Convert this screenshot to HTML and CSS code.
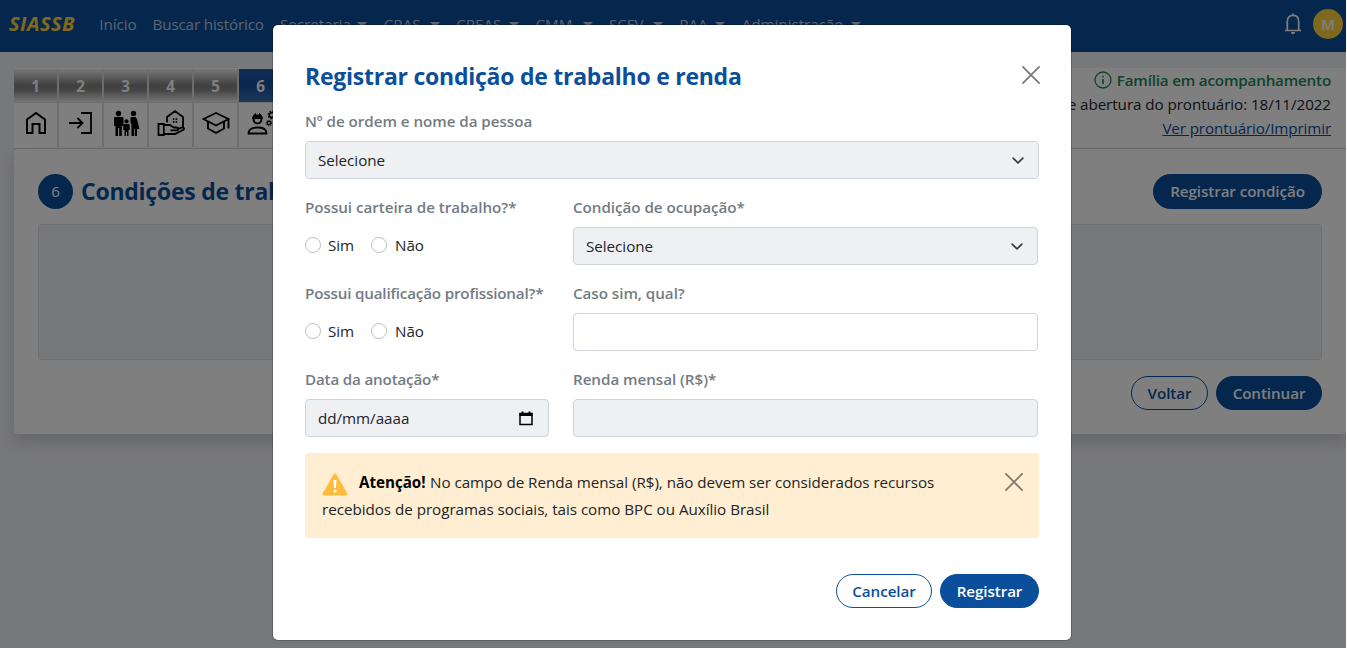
FILE: index.html
```html
<!DOCTYPE html>
<html lang="pt-BR">
<head>
<meta charset="utf-8">
<title>SIASSB</title>
<link rel="stylesheet" href="styles.css">
</head>
<body>
<div class="page">
  <header class="topbar">
    <span class="logo">SIASSB</span>
    <nav class="nav">
      <a class="w-inicio">Início</a>
      <a class="w-buscar">Buscar histórico</a>
      <a class="drop w-sec">Secretaria</a>
      <a class="drop w-cras">CRAS</a>
      <a class="drop w-creas">CREAS</a>
      <a class="drop w-cmm">CMM</a>
      <a class="drop w-scfv">SCFV</a>
      <a class="drop w-paa">PAA</a>
      <a class="drop w-adm">Administração</a>
    </nav>
    <svg class="bell" viewBox="0 0 20 24" fill="none" stroke="#fff" stroke-width="1.7"><path d="M2 18.500h16M4.300 18V9.500C4.300 5.500 6.500 3.300 10 3.300s5.700 2.200 5.700 6.200V18M10 3.300V1.500"/><path d="M8 20.500h4l-2 1.500z" fill="#fff" stroke-width="1"/></svg>
    <span class="avatar">M</span>
  </header>

  <main class="main">
    <section class="record">
      <div class="tabs">
        <div class="tab"><b>1</b><span><svg viewBox="0 0 24 26" fill="none" stroke="#000" stroke-width="2"><path d="M3 9.500 12 3l9 6.500V23h-5.500v-9h-7v9H3z"/></svg></span></div>
        <div class="tab"><b>2</b><span><svg viewBox="0 0 24 26" fill="none" stroke="#000" stroke-width="1.800"><path d="M0 13h13M8.500 8l5 5-5 5M12 3h10v20H12"/></svg></span></div>
        <div class="tab"><b>3</b><span><svg class="wide" viewBox="0 0 28 28"><circle cx="6.500" cy="4.500" r="2.700"/><path d="M2 9q0-1 1-1h7.500q1 0 1 1v8h-1.700v10H7.200v-8H6v8H3.500V17H2z"/><circle cx="14.500" cy="12.300" r="2.100"/><path d="M11.300 16q0-1 1-1h4.400q1 0 1 1v5h-1.200v6h-1.500v-4h-1v4h-1.500v-6h-1.200z"/><circle cx="21.500" cy="4.500" r="2.700"/><path d="M18.500 9q0-1 1-1h4l1.500 2 2.500 10H25v7h-2.200v-7h-.8v7h-2.500V15l-1-1z"/></svg></span></div>
        <div class="tab"><b>4</b><span><svg class="wide" viewBox="0 0 28 28" fill="none" stroke="#000" stroke-width="1.800"><path d="M10 13.500V8L18 2l8 6V18M1.500 15h5.300v11H1.500zM6.800 16h6l4 2.500h2.700c2.300 0 2.300 2.800 0 2.800h-6M20 20.500l4.500-1.800c2.500-.7 3.500 1.300 1.500 2.300L18 25H6.800"/><path d="M15.800 9.300h1.600v1.600h-1.600zm2.800 0h1.600v1.600h-1.600zm-2.800 2.800h1.600v1.600h-1.600zm2.800 0h1.600v1.600h-1.600z" fill="#000" stroke="none"/></svg></span></div>
        <div class="tab"><b>5</b><span><svg class="wide" viewBox="0 0 28 28" fill="none" stroke="#000" stroke-width="1.900"><path d="M1.500 10 14 4l12.500 6L14 16.500zM6 12.500v7l8 4.500 8-4.500v-7M26.500 10v9.500"/></svg></span></div>
        <div class="tab active"><b>6</b><span><svg class="wide" viewBox="0 0 28 28" fill="none" stroke="#000" stroke-width="1.800"><path d="M1.500 24.500c0-4.500 3-6 9-6s9 1.500 9 6z"/><path d="M6.500 9.500c0 6.500 8 6.500 8 0"/><path d="M5.500 9.500q.5-3.500 3-5v1.500h4V4.500q2.500 1.500 3 5z" fill="#000" stroke-width="1"/><circle cx="25" cy="6" r="2.600" stroke-width="1.500"/><circle cx="25" cy="6" r="3.800" stroke-width="1.300" stroke-dasharray="1.500 1.480"/><circle cx="22" cy="14" r="1.700" stroke-width="1.300"/><circle cx="22" cy="14" r="2.700" stroke-width="1" stroke-dasharray="1.200 .92"/></svg></span></div>
      </div>
      <div class="status">
        <div class="family"><svg viewBox="0 0 18 18" fill="none" stroke="#198754" stroke-width="1.300"><circle cx="9" cy="9" r="8"/><path d="M9 8v5M9 4.800v1.500" stroke-width="1.600"/></svg><span>Família em acompanhamento</span></div>
        <div class="opened">Data de abertura do prontuário: 18/11/2022</div>
        <a class="print">Ver prontuário/Imprimir</a>
      </div>
    </section>

    <section class="card">
      <div class="card-head">
        <span class="step">6</span>
        <h2>Condições de trabalho e renda</h2>
        <button class="btn primary big">Registrar condição</button>
      </div>
      <div class="empty"></div>
      <div class="card-foot">
        <button class="btn outline w-voltar">Voltar</button>
        <button class="btn primary w-cont">Continuar</button>
      </div>
    </section>
  </main>
</div>

<div class="backdrop">
  <div class="dialog">
    <div class="dialog-head">
      <h1>Registrar condição de trabalho e renda</h1>
      <svg class="close" viewBox="0 0 16 16"><path d="M.8.8l14.400 14.400M15.200.8.8 15.200"/></svg>
    </div>
    <div class="field full">
      <label>Nº de ordem e nome da pessoa</label>
      <div class="control filled"><span>Selecione</span><svg class="chev" viewBox="0 0 16 16"><path d="m2 5 6 6 6-6"/></svg></div>
    </div>
    <div class="grid">
      <div class="field">
        <label>Possui carteira de trabalho?*</label>
        <div class="radios"><i></i><span class="sim">Sim</span><i></i><span class="nao">Não</span></div>
      </div>
      <div class="field">
        <label>Condição de ocupação*</label>
        <div class="control filled"><span>Selecione</span><svg class="chev" viewBox="0 0 16 16"><path d="m2 5 6 6 6-6"/></svg></div>
      </div>
      <div class="field">
        <label class="tight">Possui qualificação profissional?*</label>
        <div class="radios"><i></i><span class="sim">Sim</span><i></i><span class="nao">Não</span></div>
      </div>
      <div class="field">
        <label>Caso sim, qual?</label>
        <div class="control"></div>
      </div>
      <div class="field">
        <label class="tight">Data da anotação*</label>
        <div class="control filled"><span>dd/mm/aaaa</span><svg class="cal" viewBox="0 0 14 15"><path d="M1 2.500h12v11H1z" fill="none" stroke="#000" stroke-width="1.500"/><path d="M.5 2h13v3H.5zM2.500.5h2v2h-2zm7 0h2v2h-2z"/></svg></div>
      </div>
      <div class="field">
        <label>Renda mensal (R$)*</label>
        <div class="control filled"></div>
      </div>
    </div>
    <div class="alert">
      <div class="alert-text">
        <div class="line"><svg class="warn" viewBox="0 0 26 23"><path d="M13 2 24 21H2z" fill="#ffbc3b" stroke="#ffbc3b" stroke-width="3" stroke-linejoin="round"/><path d="M11.500 7h3l-.6 8h-1.800z" fill="#fff"/><circle cx="13" cy="18" r="1.600" fill="#fff"/></svg><b>Atenção!</b><span>No campo de Renda mensal (R$), não devem ser considerados recursos</span></div>
        <div class="line"><span>recebidos de programas sociais, tais como BPC ou Auxílio Brasil</span></div>
      </div>
      <svg class="close" viewBox="0 0 16 16"><path d="M.8.8l14.400 14.400M15.200.8.8 15.200"/></svg>
    </div>
    <div class="dialog-foot">
      <button class="btn outline w-canc">Cancelar</button>
      <button class="btn primary w-reg">Registrar</button>
    </div>
  </div>
</div>
</body>
</html>
```

FILE: styles.css
```css
* { box-sizing: border-box; }
html { background: #fff; }
body { margin: 0; height: 648px; overflow: hidden; font: 15.200px/24px "Open Sans", "Noto Sans", sans-serif; letter-spacing: -0.030px; color: #212529; }
h1, h2 { margin: 0; color: #0b4f9c; font-weight: 700; letter-spacing: -0.250px; }
.page { width: 1346px; height: 648px; overflow: hidden; background: #eff0f3; }
.page, .dialog { white-space: nowrap; }

.topbar { display: flex; align-items: center; height: 52px; padding: 0 3px 4px 9px; background: #0b4f9c; }
.logo { width: 82px; color: #ffd23c; font-size: 20px; font-weight: 700; font-style: italic; letter-spacing: 0.450px; }
.nav { display: flex; flex: 1; color: #b6cae1; }
.nav a { margin: 0 8.200px; }
.drop { display: flex; align-items: center; justify-content: space-between; }
.drop::after { content: ""; border: 5px solid transparent; border-top-color: #b6cae1; border-bottom: 0; }
.w-inicio { width: 37px; }
.w-buscar { width: 111px; letter-spacing: -0.150px; }
.w-sec { width: 87.500px; }
.w-cras { width: 56px; }
.w-creas { width: 63px; }
.w-cmm { width: 57px; }
.w-scfv { width: 54px; }
.w-paa { width: 46px; }
.w-adm { width: 119px; }
.bell { width: 20px; height: 24px; margin-right: 10px; }
.avatar { width: 30px; height: 30px; border-radius: 50%; background: #ffd23c; color: #fff; line-height: 30px; text-align: center; font-weight: 600; }

.main { padding: 16px 0 0 14px; }
.record { display: flex; justify-content: space-between; height: 81px; padding: 1px 15px 0 0; background: #fff; border-bottom: 1px solid #d2d3d5; }
.tabs { display: flex; gap: 2px; background: #dcdcde; height: 78px; }
.tab { width: 43px; }
.tab b { display: block; height: 33px; line-height: 35px; text-align: center; color: #fff; background: linear-gradient(#efefef, #808080 50%, #8c8c8c 65%, #ededed); }
.tab.active b { background: linear-gradient(#1f5aa6, #1450a0 50%, #3a70b2); }
.tab span { display: flex; align-items: center; justify-content: center; height: 45px; border-top: 1px solid #ddd; background: #fff; }
.tab svg { width: 24px; height: 26px; margin-top: -5px; }
.tab svg.wide { width: 28px; height: 28px; }
.status { text-align: right; }
.family { display: flex; align-items: center; justify-content: flex-end; gap: 5px; margin-top: -1px; color: #198754; font-weight: 600; letter-spacing: -0.180px; }
.family svg { width: 18px; height: 18px; }
.opened { letter-spacing: -0.060px; }
.print { letter-spacing: -0.120px; color: #0b4f9c; text-decoration: underline; }

.card { height: 285px; padding: 24px 24px 0; border-radius: 4px; background: #fff; box-shadow: 0 8px 16px rgba(0, 0, 0, .15); }
.card-head { display: flex; align-items: center; }
.step { width: 35px; height: 35px; margin-right: 8px; border-radius: 50%; background: #0b4f9c; color: #fff; line-height: 35px; text-align: center; }
.card-head h2 { flex: 1; width: 0; overflow: hidden; font-size: 23px; line-height: 36px; }
.empty { height: 136px; margin: 15px 0 16px; border: 1px solid #dcdde0; border-radius: 3px; background: #eff0f3; }
.card-foot, .dialog-foot { display: flex; justify-content: flex-end; gap: 8px; }
.btn { height: 34px; padding: 0; border: 1px solid #0b4f9c; border-radius: 18px; font: 600 15.200px/24px "Open Sans", "Noto Sans", sans-serif; letter-spacing: -0.080px; }
.primary { background: #0b4f9c; color: #fff; }
.outline { background: #fff; color: #0b4f9c; }
.big { width: 169px; height: 35px; }
.w-voltar { width: 77px; }
.w-cont { width: 106px; }
.w-canc { width: 96px; }
.w-reg { width: 99px; }

.backdrop { position: absolute; top: 0; left: 0; width: 1346px; height: 648px; padding: 25px 0 0 273px; background: rgba(0, 0, 0, .5); }
.dialog { width: 798px; height: 615px; padding: 32px; border-radius: 5px; background: #fff; box-shadow: 0 0 0 1px rgba(0, 0, 0, .2); }
.dialog-head { display: flex; align-items: center; justify-content: space-between; height: 38px; margin-bottom: 14px; }
.dialog-head h1 { font-size: 23px; }
.close { width: 18px; height: 18px; margin-right: -1px; fill: none; stroke: #777; stroke-width: 1.500; stroke-linecap: round; }
.dialog-head .close { margin-top: -2px; }
.field label { display: block; margin-bottom: 8px; height: 24px; color: #737b83; font-weight: 600; letter-spacing: -0.040px; }
.field label.tight { letter-spacing: -0.180px; }
.full { margin-bottom: 16px; }
.grid { display: grid; grid-template-columns: 244px 465px; gap: 16px 24px; }
.control { display: flex; align-items: center; justify-content: space-between; height: 38px; padding: 0 12px; border: 1px solid #ced4da; border-radius: 4px; }
.filled { background: #eff0f2; }
.chev { width: 16px; height: 13px; fill: none; stroke: #343a40; stroke-width: 2; stroke-linecap: round; stroke-linejoin: round; }
.cal { width: 14px; height: 15px; margin-right: 3px; }
.radios { display: flex; align-items: center; height: 36px; }
.radios i { width: 16px; height: 16px; border: 1px solid #bfbfbf; border-radius: 50%; }
.sim { width: 27px; margin: 0 16px 0 7px; }
.nao { margin-left: 8px; }
.alert { display: flex; justify-content: space-between; height: 85px; margin-top: 16px; padding: 14px 16px; border: 1px solid #ffecc8; border-radius: 4px; background: #ffeed1; letter-spacing: -0.030px; }
.line { display: flex; align-items: center; height: 27px; }
.warn { width: 26px; height: 23px; margin: 6px 11px 0 0; }
.line b { width: 71px; color: #000; }
.alert .close { margin-top: 5px; stroke: #80776a; }
.dialog-foot { margin-top: 36px; }
```
